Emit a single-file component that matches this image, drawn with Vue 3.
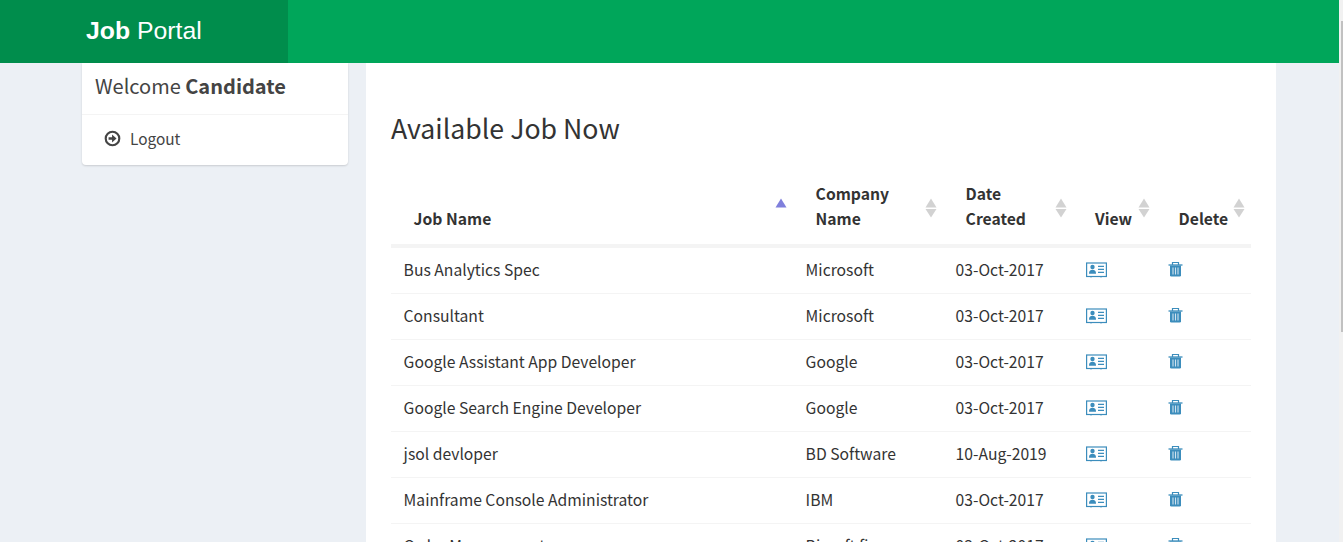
<template>
  <div class="page">
    <header class="topbar">
      <div class="logo"><b>Job</b> Portal</div>
    </header>
    <div class="layout">
      <aside class="side">
        <div class="welcome">Welcome <b>Candidate</b></div>
        <a class="logout">
          <svg width="17" height="17" viewBox="0 0 16 16">
            <circle cx="8" cy="8" r="6.4" fill="none" stroke="#444" stroke-width="2" />
            <path d="M4.300 6.800h3.300V4.300L11.800 8l-4.200 3.700V9.200H4.300z" fill="#444" />
          </svg>
          <span>Logout</span>
        </a>
      </aside>
      <main class="content">
        <h2>Available Job Now</h2>
        <table>
          <colgroup>
            <col style="width: 402px" />
            <col style="width: 150px" />
            <col style="width: 130px" />
            <col style="width: 82px" />
            <col style="width: 96px" />
          </colgroup>
          <thead>
            <tr>
              <th v-for="h in heads" :key="h.key" :class="h.key">
                <template v-for="(line, i) in h.lines" :key="i">{{ line }}<br v-if="i < h.lines.length - 1" /></template>
                <svg class="sort" width="12" height="20" viewBox="0 0 12 20">
                  <path d="M6 0.500l5.500 9H0.500z" :fill="h.active ? '#7f7fdc' : '#d2d2d2'" />
                  <path v-if="!h.active" d="M0.500 11h11l-5.500 8.500z" fill="#d2d2d2" />
                </svg>
              </th>
            </tr>
          </thead>
          <tbody>
            <tr v-for="job in jobs" :key="job.name">
              <td>{{ job.name }}</td>
              <td>{{ job.company }}</td>
              <td>{{ job.date }}</td>
              <td>
                <svg class="ico" width="21" height="16" viewBox="0 0 21 16">
                  <rect x="0.600" y="1" width="19.800" height="13.500" fill="none" stroke="#3c8dbc" stroke-width="1.200" />
                  <circle cx="6.500" cy="5" r="2.200" fill="#3c8dbc" />
                  <path d="M3 11.800c0-3 1.200-4 3.500-4s3.500 1 3.500 4z" fill="#3c8dbc" />
                  <path d="M12 4.300h6M12 7.300h6M12 10.300h6" stroke="#3c8dbc" stroke-width="1.200" />
                  <path d="M5 14.500v1M15 14.500v1" stroke="#3c8dbc" stroke-width="1" />
                </svg>
              </td>
              <td>
                <svg class="ico" width="15" height="17" viewBox="0 0 15 16">
                  <path d="M0.500 3.500h14" stroke="#3c8dbc" stroke-width="1.300" />
                  <path d="M4.500 3.500V1h6v2.500" fill="none" stroke="#3c8dbc" stroke-width="1.200" />
                  <path d="M2 4h11v9.700q0 1.300-1.300 1.300H3.300Q2 15 2 13.700z" fill="#3c8dbc" />
                  <path d="M5 6v7M7.500 6v7M10 6v7" stroke="#cfe3ef" stroke-width="1.100" />
                </svg>
              </td>
            </tr>
          </tbody>
        </table>
      </main>
    </div>
    <div class="scrollbar"><div class="thumb"></div></div>
  </div>
</template>

<script setup>
const heads = [
  { key: "name", lines: ["Job Name"], active: true },
  { key: "company", lines: ["Company", "Name"] },
  { key: "date", lines: ["Date", "Created"] },
  { key: "view", lines: ["View"] },
  { key: "del", lines: ["Delete"] },
]

const jobs = [
  { name: "Bus Analytics Spec", company: "Microsoft", date: "03-Oct-2017" },
  { name: "Consultant", company: "Microsoft", date: "03-Oct-2017" },
  { name: "Google Assistant App Developer", company: "Google", date: "03-Oct-2017" },
  { name: "Google Search Engine Developer", company: "Google", date: "03-Oct-2017" },
  { name: "jsol devloper", company: "BD Software", date: "10-Aug-2019" },
  { name: "Mainframe Console Administrator", company: "IBM", date: "03-Oct-2017" },
  { name: "Order Management", company: "Bizsoft firm", date: "03-Oct-2017" },
]
</script>

<style>
html, body {
  height: 100%;
  overflow: hidden;
}
</style>

<style scoped>
.page {
  position: relative;
  height: 542px;
  overflow: hidden;
  background: #ecf0f5;
  font-family: "Noto Sans CJK SC", "Noto Sans", sans-serif;
  color: #333;
  font-size: 15.7px;
}
.topbar {
  height: 63px;
  margin-right: 4px;
  background: #00a65a;
}
.logo {
  width: 288px;
  height: 63px;
  box-sizing: border-box;
  padding-left: 86px;
  background: #008d4c;
  color: #fff;
  font-family: "Liberation Sans", Arial, sans-serif;
  font-size: 24.8px;
  line-height: 61px;
}
.layout {
  display: flex;
  align-items: flex-start;
  padding-left: 82px;
  gap: 18px;
}
.side {
  width: 266px;
  height: 102px;
  background: #fff;
  border-radius: 0 0 4px 4px;
  box-shadow: 0 1px 2px rgba(0, 0, 0, 0.15);
  color: #444;
}
.welcome {
  height: 52px;
  box-sizing: border-box;
  padding-left: 13px;
  border-bottom: 1px solid #f4f4f4;
  font-size: 20px;
  line-height: 45px;
}
.logout {
  display: flex;
  align-items: center;
  height: 50px;
  padding-left: 22px;
  gap: 9px;
  margin-top: -2px;
  font-size: 15.4px;
}
.content {
  width: 910px;
  box-sizing: border-box;
  height: 479px;
  padding: 0 25px;
  background: #fff;
}
h2 {
  margin: 0;
  padding-top: 46px;
  font-size: 26.7px;
  font-weight: 400;
  line-height: 38px;
  color: #333;
}
table {
  margin-top: 34px;
  width: 860px;
  table-layout: fixed;
  border-collapse: separate;
  border-spacing: 0;
}
th {
  position: relative;
  padding: 0 0 13px 22.6px;
  border-bottom: 4px solid #f4f4f4;
  text-align: left;
  vertical-align: bottom;
  font-weight: 700;
  line-height: 25px;
}
th.view {
  padding-left: 22px;
}
th.del {
  padding-left: 23.6px;
}
.sort {
  position: absolute;
  right: 6px;
  top: 17px;
}
.view .sort {
  right: 5px;
}
td {
  height: 46px;
  padding: 0 0 2px 12.6px;
  box-sizing: border-box;
  border-bottom: 1px solid #f4f4f4;
  line-height: 25px;
}
.ico {
  display: block;
}
.scrollbar {
  position: absolute;
  top: 0;
  right: 0;
  width: 4px;
  height: 542px;
  background: #f1f1f1;
}
.thumb {
  position: absolute;
  top: 21px;
  right: 0;
  width: 2px;
  height: 311px;
  background: #c1c1c1;
}
</style>
